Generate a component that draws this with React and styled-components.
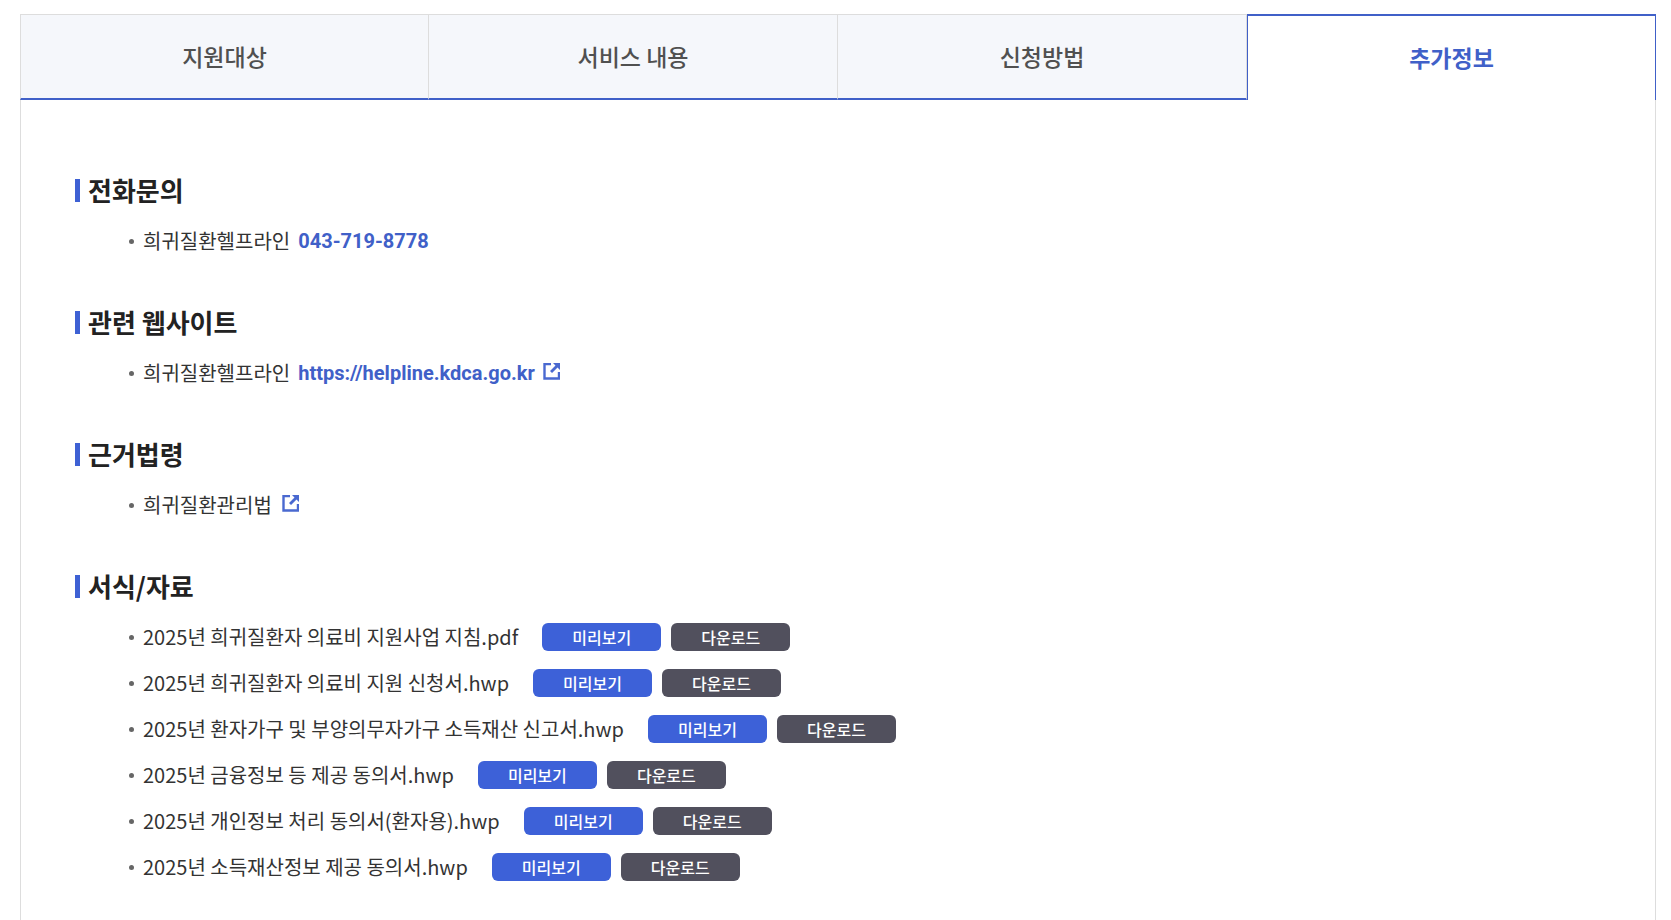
import React, { useState } from "react";
import styled, { createGlobalStyle, css } from "styled-components";

const GlobalStyle = createGlobalStyle`
  * {
    box-sizing: border-box;
  }

  body {
    margin: 0;
    background-color: #fff;
    color: #333;
    font-family: "Noto Sans CJK KR", sans-serif;
    font-size: 20px;
    line-height: 30px;
    word-break: keep-all;
  }

  button {
    font-family: inherit;
    cursor: pointer;
  }
`;

const Wrapper = styled.div`
  display: flex;
  flex-direction: column;
  min-height: 100vh;
  padding: 14px 15px 0 20px;
`;

const TabList = styled.div`
  display: grid;
  grid-template-columns: repeat(4, 1fr);
`;

const Tab = styled.button`
  height: 86px;
  padding: 0 0 2px;
  border: 0 solid #ddd;
  border-top-width: 1px;
  border-right-width: 1px;
  border-bottom: 2px solid #4060c8;
  background-color: #f5f7fb;
  color: #505050;
  font-size: 23px;
  font-weight: 500;
  line-height: 34px;

  &:first-child {
    border-left-width: 1px;
  }

  ${({ $active }) =>
    $active &&
    css`
      border: 1px solid #4060c8;
      border-top-width: 2px;
      border-bottom: 0;
      background-color: #fff;
      color: #4060c8;
      font-weight: 700;
    `}
`;

const Panel = styled.div`
  display: flex;
  flex: 1;
  flex-direction: column;
  gap: 40px;
  padding: 72px 54px 40px;
  border: solid #ddd;
  border-width: 0 1px;
`;

const Section = styled.section`
  display: flex;
  flex-direction: column;
  gap: 10px;
`;

const Title = styled.h2`
  display: flex;
  align-items: center;
  gap: 8px;
  margin: 0;
  color: #222;
  font-size: 26px;
  font-weight: 700;
  line-height: 36px;

  &::before {
    content: "";
    width: 5px;
    height: 23px;
    background-color: #3e61d4;
  }
`;

const List = styled.ul`
  margin: 0;
  padding: 0 0 0 54px;
  list-style: none;
`;

const Item = styled.li`
  display: flex;
  align-items: center;
  min-height: 46px;

  &::before {
    content: "";
    width: 5px;
    height: 5px;
    margin-right: 9px;
    border-radius: 50%;
    background-color: #666;
  }
`;

const PointLink = styled.a`
  display: inline-flex;
  align-items: center;
  gap: 8px;
  margin-left: 8px;
  color: #4060c8;
  font-family: Roboto, "Noto Sans CJK KR", sans-serif;
  font-weight: 700;
  text-decoration: none;
`;

const LawLink = styled.a`
  display: inline-flex;
  align-items: center;
  gap: 10px;
  color: inherit;
  text-decoration: none;
`;

const Buttons = styled.div`
  display: flex;
  gap: 10px;
  margin-left: 24px;
`;

const FileButton = styled.button`
  width: 119px;
  height: 28px;
  padding: 0;
  border: 0;
  border-radius: 6px;
  background-color: ${({ $dark }) => ($dark ? "#51505d" : "#3d61d8")};
  color: #fff;
  font-size: 16px;
  font-weight: 500;
  line-height: 24px;
`;

const Icon = styled.svg`
  width: 17px;
  height: 17px;
  margin-bottom: 4px;
`;

const NewWindowIcon = () => (
  <Icon viewBox="0 0 17 17" fill="none" aria-hidden="true">
    <path d="M8 1H1.5V15.5H16V9" stroke="#4a69d0" strokeWidth="2.4" />
    <path d="M10 0H17V7L14.5 4.5L9 10L7 8L12.5 2.5Z" fill="#4a69d0" />
  </Icon>
);

const tabs = ["지원대상", "서비스 내용", "신청방법", "추가정보"];

const files = [
  "2025년 희귀질환자 의료비 지원사업 지침.pdf",
  "2025년 희귀질환자 의료비 지원 신청서.hwp",
  "2025년 환자가구 및 부양의무자가구 소득재산 신고서.hwp",
  "2025년 금융정보 등 제공 동의서.hwp",
  "2025년 개인정보 처리 동의서(환자용).hwp",
  "2025년 소득재산정보 제공 동의서.hwp",
];

const App = () => {
  const [active, setActive] = useState(3);

  return (
    <>
      <GlobalStyle />
      <Wrapper>
        <TabList role="tablist">
          {tabs.map((tab, index) => (
            <Tab
              key={tab}
              type="button"
              role="tab"
              aria-selected={active === index}
              $active={active === index}
              onClick={() => setActive(index)}
            >
              {tab}
            </Tab>
          ))}
        </TabList>
        <Panel role="tabpanel">
          <Section>
            <Title>전화문의</Title>
            <List>
              <Item>
                희귀질환헬프라인
                <PointLink href="tel:043-719-8778">043-719-8778</PointLink>
              </Item>
            </List>
          </Section>
          <Section>
            <Title>관련 웹사이트</Title>
            <List>
              <Item>
                희귀질환헬프라인
                <PointLink href="https://helpline.kdca.go.kr" target="_blank">
                  https://helpline.kdca.go.kr
                  <NewWindowIcon />
                </PointLink>
              </Item>
            </List>
          </Section>
          <Section>
            <Title>근거법령</Title>
            <List>
              <Item>
                <LawLink href="#law">
                  희귀질환관리법
                  <NewWindowIcon />
                </LawLink>
              </Item>
            </List>
          </Section>
          <Section>
            <Title>서식/자료</Title>
            <List>
              {files.map((file) => (
                <Item key={file}>
                  {file}
                  <Buttons>
                    <FileButton type="button">미리보기</FileButton>
                    <FileButton type="button" $dark>
                      다운로드
                    </FileButton>
                  </Buttons>
                </Item>
              ))}
            </List>
          </Section>
        </Panel>
      </Wrapper>
    </>
  );
};

export default App;
